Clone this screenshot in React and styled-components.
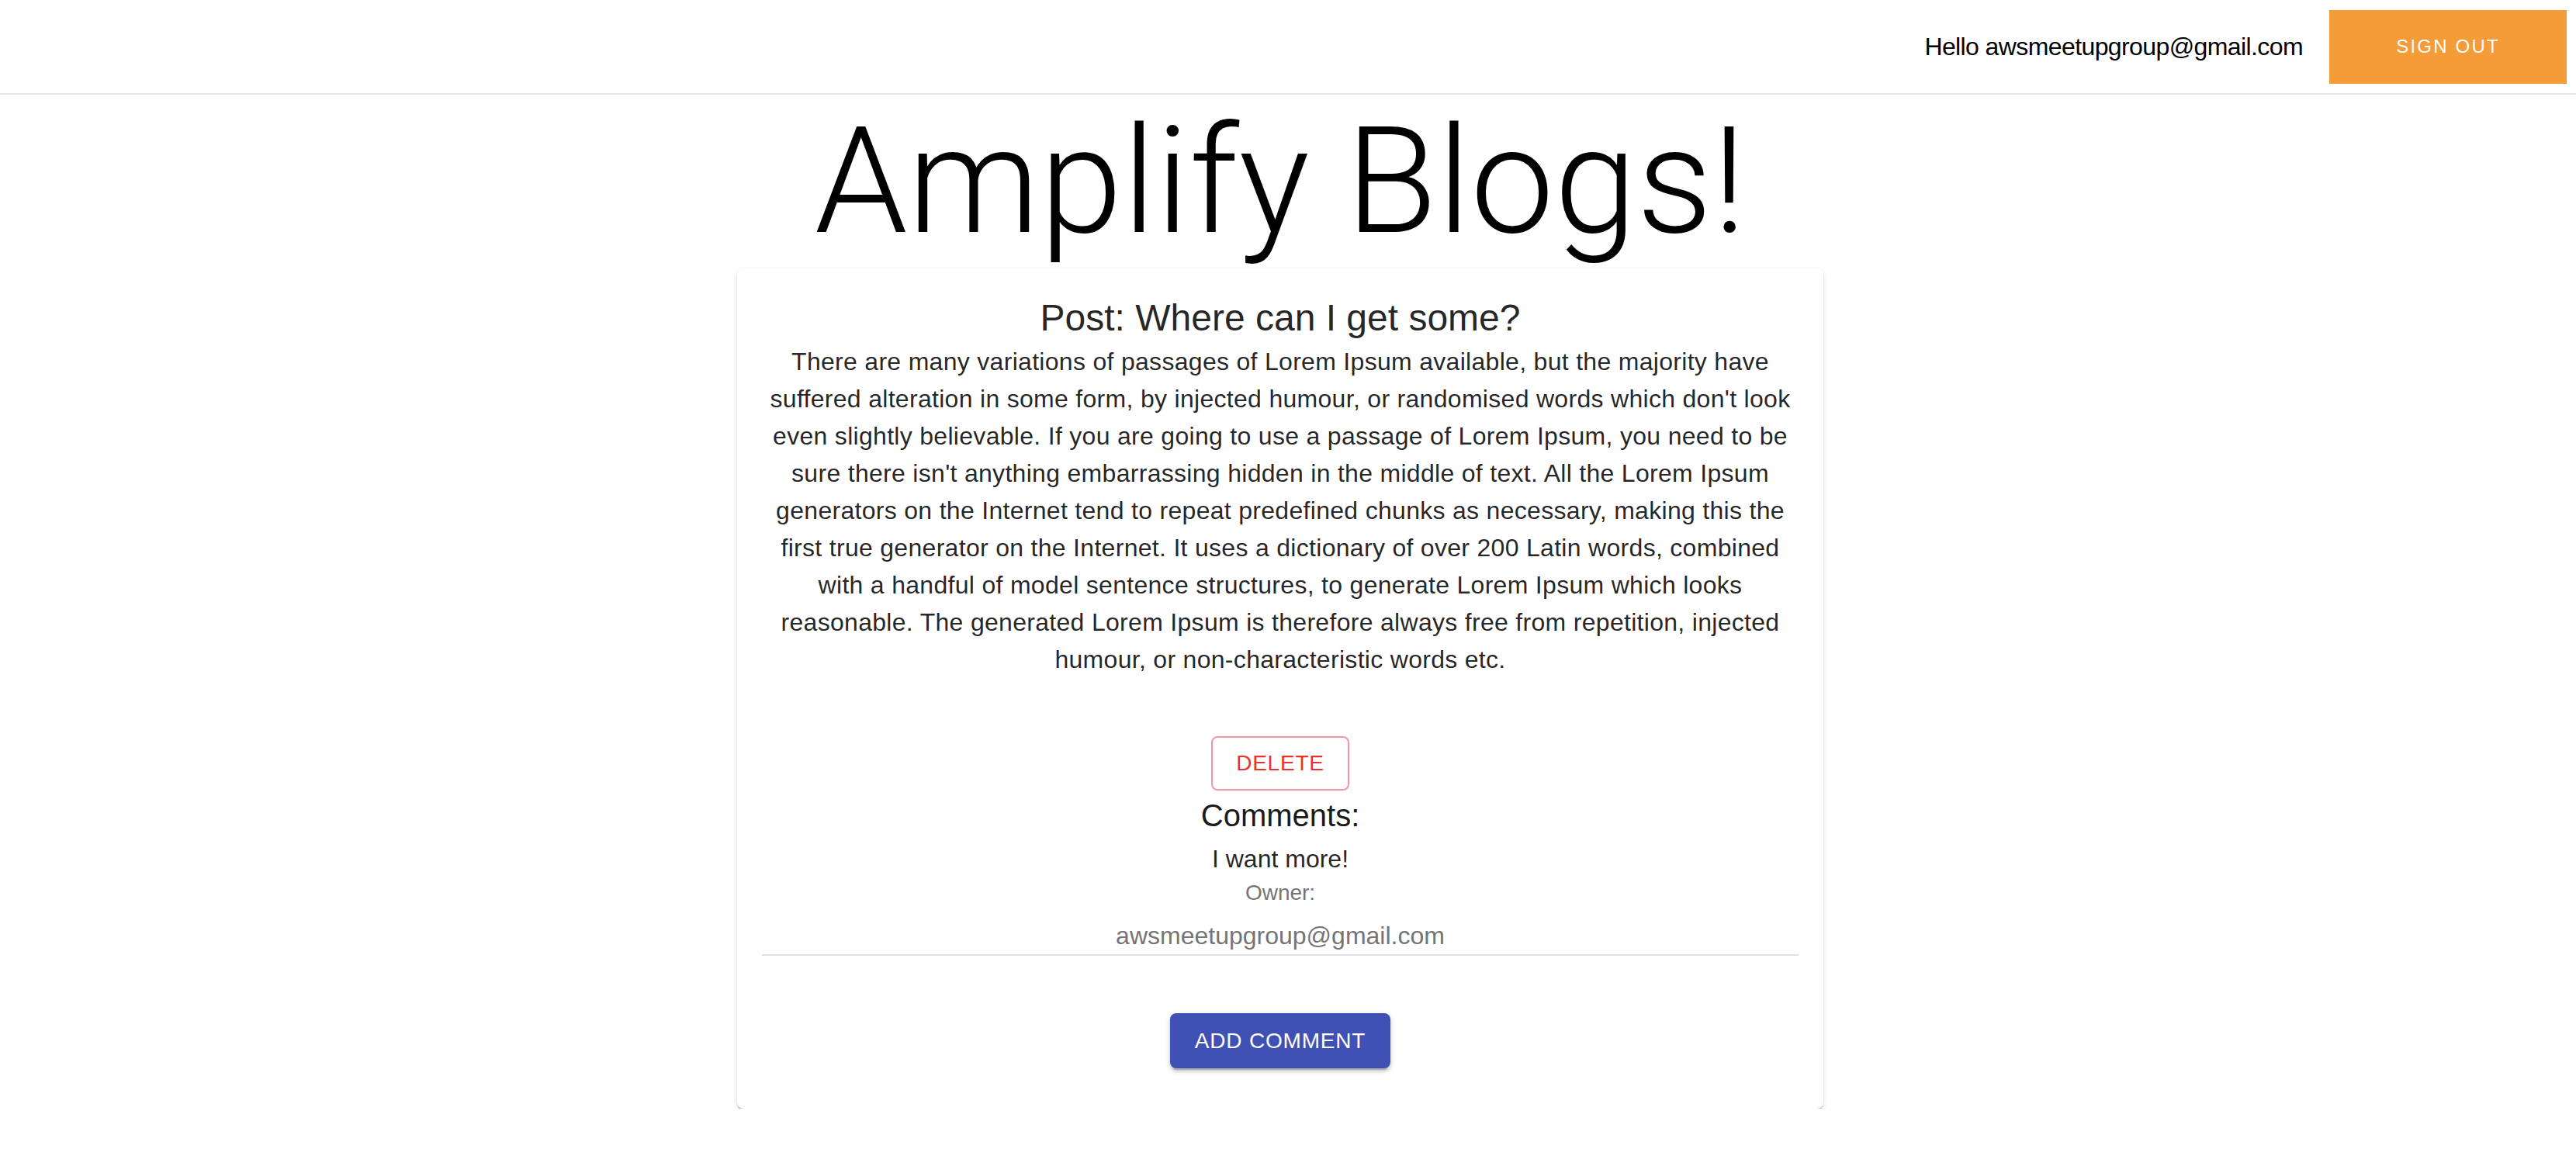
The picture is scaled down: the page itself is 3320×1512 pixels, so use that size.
import React from "react";
import styled, { createGlobalStyle } from "styled-components";

const GlobalStyle = createGlobalStyle`
    body {
        margin: 0;
        background: #ffffff;
        font-family: "Liberation Sans", Arial, sans-serif;
        color: rgba(0, 0, 0, 0.87);
    }
`;

const NavBar = styled.header`
    height: 122px;
    box-sizing: border-box;
    border-bottom: 2px solid #e7e7e7;
    display: flex;
    align-items: center;
    justify-content: flex-end;
    padding-right: 12px;
`;

const Greeting = styled.span`
    font-size: 32px;
    letter-spacing: -0.6px;
    color: #000000;
    margin-right: 34px;
`;

const SignOutButton = styled.button`
    width: 306px;
    height: 95px;
    border: none;
    background: #f49c37;
    color: #ffffff;
    font-family: inherit;
    font-size: 24px;
    letter-spacing: 2.2px;
    text-transform: uppercase;
    cursor: pointer;
`;

const Main = styled.main`
    display: flex;
    flex-direction: column;
    align-items: center;
    padding-right: 20px;
`;

const Title = styled.h1`
    margin: 0;
    font-family: "Roboto", "Liberation Sans", sans-serif;
    font-weight: 300;
    font-size: 192px;
    line-height: 224px;
    color: #000000;
    white-space: nowrap;
`;

const Card = styled.section`
    width: 1400px;
    box-sizing: border-box;
    padding: 32px 32px 52px;
    border-radius: 8px;
    background: #ffffff;
    box-shadow: 0 4px 2px -2px rgba(0, 0, 0, 0.2), 0 2px 2px 0 rgba(0, 0, 0, 0.14),
        0 2px 6px 0 rgba(0, 0, 0, 0.12);
    display: flex;
    flex-direction: column;
    align-items: center;
    text-align: center;
`;

const PostTitle = styled.h5`
    margin: 0;
    font-size: 48px;
    font-weight: 400;
    line-height: 64px;
`;

const Body = styled.p`
    margin: 0;
    font-size: 32px;
    line-height: 48px;
    white-space: nowrap;
    letter-spacing: 0.3px;
`;

const OutlinedButton = styled.button`
    margin-top: 75px;
    height: 70px;
    padding: 0 30px;
    border: 2px solid #f297a3;
    border-radius: 8px;
    background: transparent;
    color: #e8322a;
    font-family: inherit;
    font-size: 28px;
    letter-spacing: 0.8px;
    text-transform: uppercase;
    cursor: pointer;
`;

const CommentsHeading = styled.h6`
    margin: 0;
    font-size: 40px;
    font-weight: 400;
    line-height: 64px;
    color: #1b1b1b;
`;

const CommentText = styled.p`
    margin: 0;
    font-size: 32px;
    line-height: 48px;
`;

const Secondary = styled.p`
    margin: ${(p) => (p.$spaced ? "11px 0 0" : "0")};
    font-size: ${(p) => (p.$large ? "32px" : "28px")};
    line-height: ${(p) => (p.$large ? "48px" : "40px")};
    color: #757575;
`;

const Divider = styled.hr`
    align-self: stretch;
    margin: 0;
    border: none;
    height: 2px;
    background: #e0e0e0;
`;

const ContainedButton = styled.button`
    margin-top: 74px;
    height: 71px;
    padding: 0 32px;
    border: none;
    border-radius: 8px;
    background: #3f51b5;
    color: #ffffff;
    font-family: inherit;
    font-size: 28px;
    letter-spacing: 0.8px;
    text-transform: uppercase;
    box-shadow: 0 6px 2px -4px rgba(0, 0, 0, 0.2), 0 4px 4px 0 rgba(0, 0, 0, 0.14),
        0 2px 10px 0 rgba(0, 0, 0, 0.12);
    cursor: pointer;
`;

const bodyLines = [
    "There are many variations of passages of Lorem Ipsum available, but the majority have",
    "suffered alteration in some form, by injected humour, or randomised words which don't look",
    "even slightly believable. If you are going to use a passage of Lorem Ipsum, you need to be",
    "sure there isn't anything embarrassing hidden in the middle of text. All the Lorem Ipsum",
    "generators on the Internet tend to repeat predefined chunks as necessary, making this the",
    "first true generator on the Internet. It uses a dictionary of over 200 Latin words, combined",
    "with a handful of model sentence structures, to generate Lorem Ipsum which looks",
    "reasonable. The generated Lorem Ipsum is therefore always free from repetition, injected",
    "humour, or non-characteristic words etc.",
];

export default function App() {
    return (
        <>
            <GlobalStyle />
            <NavBar>
                <Greeting>Hello awsmeetupgroup@gmail.com</Greeting>
                <SignOutButton>Sign Out</SignOutButton>
            </NavBar>
            <Main>
                <Title>Amplify Blogs!</Title>
                <Card>
                    <PostTitle>Post: Where can I get some?</PostTitle>
                    <Body>
                        {bodyLines.map((line, i) => (
                            <React.Fragment key={i}>
                                {line}
                                {i < bodyLines.length - 1 && <br />}
                            </React.Fragment>
                        ))}
                    </Body>
                    <OutlinedButton>Delete</OutlinedButton>
                    <CommentsHeading>Comments:</CommentsHeading>
                    <CommentText>I want more!</CommentText>
                    <Secondary>Owner:</Secondary>
                    <Secondary $large $spaced>awsmeetupgroup@gmail.com</Secondary>
                    <Divider />
                    <ContainedButton>Add Comment</ContainedButton>
                </Card>
            </Main>
        </>
    );
}
